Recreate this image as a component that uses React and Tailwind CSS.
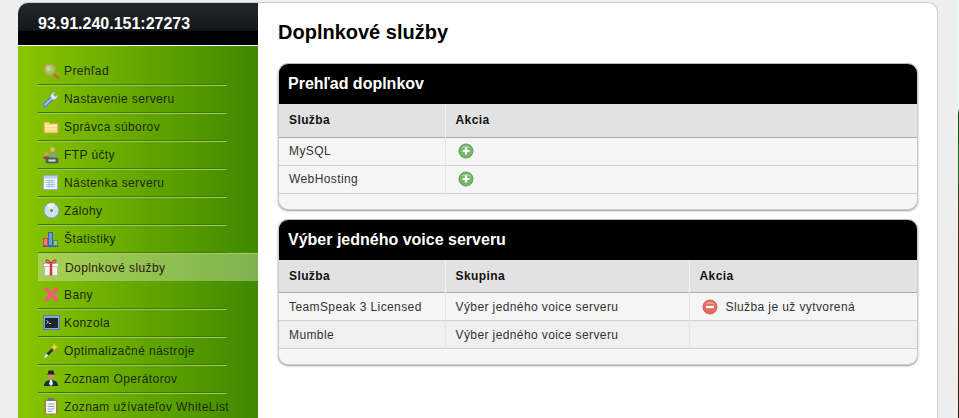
const IconSearch = () => (
  <svg width="18" height="18" viewBox="0 0 18 18">
    <path d="M11 11l5 5" stroke="#b5752f" strokeWidth="3" strokeLinecap="round" />
    <circle cx="7.5" cy="7.5" r="5.5" fill="#9ccb6a" stroke="#c79a4c" strokeWidth="1.6" />
    <circle cx="6.5" cy="6.5" r="2.5" fill="#b9dc92" />
  </svg>
);

const IconWrench = () => (
  <svg width="18" height="18" viewBox="0 0 18 18">
    <path d="M3 15L10 8" stroke="#4f80c8" strokeWidth="4.5" strokeLinecap="round" />
    <path d="M3 15L10 8" stroke="#9cc0ee" strokeWidth="2" strokeLinecap="round" />
    <path d="M9 8c-1-3 1-6 4.500-6l-2 2.500 1.500 2 2.500-1.500c.5 3-2.500 5.500-5 4.500z" fill="#e4e8ee" stroke="#8c98a8" strokeWidth=".6" />
  </svg>
);

const IconFolder = () => (
  <svg width="16" height="14" viewBox="0 0 16 14">
    <path d="M1 2h5l1 1.500h8V13H1z" fill="#f8dc8a" stroke="#d9a441" />
    <path d="M2 6h12" stroke="#fff4c8" strokeWidth="1.500" />
    <path d="M2 9h12" stroke="#fdeeb5" strokeWidth="1.500" />
  </svg>
);

const IconFtp = () => (
  <svg width="18" height="18" viewBox="0 0 18 18">
    <circle cx="10.500" cy="3.500" r="2.500" fill="#e8b070" />
    <path d="M7 9c0-2 2-3 3.500-3S15 7 15 9v3H7z" fill="#7fa868" />
    <circle cx="4.500" cy="8" r="2" fill="#d99a68" />
    <path d="M1 13c0-2 1.500-3 3.500-3S8 11 8 13z" fill="#8a5a44" />
    <rect x="4" y="12" width="12" height="5" rx="1" fill="#59636e" stroke="#30363c" strokeWidth=".5" />
    <rect x="6.500" y="13.500" width="7" height="2" fill="#d8dde2" />
  </svg>
);

const IconTable = () => (
  <svg width="16" height="16" viewBox="0 0 16 16">
    <rect x=".5" y=".5" width="14" height="14" fill="#f4f8fc" stroke="#8eb0d8" />
    <rect x="1" y="1" width="13" height="2.500" fill="#b8d0ec" />
    <path d="M3 5.500h9M3 7.500h9M3 9.500h9M3 11.500h9M6 4.500v8M9 4.500v8" stroke="#98b8dc" strokeWidth=".8" />
  </svg>
);

const IconDisc = () => (
  <svg width="17" height="17" viewBox="0 0 17 17">
    <circle cx="8.500" cy="8.500" r="7.500" fill="#cfe0f4" stroke="#7fa0cc" />
    <path d="M8.500 8.500L4 2.500A7.500 7.500 0 0 1 12 2z" fill="#eaf3fc" />
    <circle cx="8.500" cy="8.500" r="2.200" fill="#6f9a50" stroke="#f4f8fc" />
  </svg>
);

const IconChart = () => (
  <svg width="16" height="16" viewBox="0 0 16 16">
    <rect x=".5" y="7.500" width="4" height="7" fill="#ee7c80" stroke="#c23c48" strokeWidth=".8" />
    <rect x="5.500" y="1.500" width="4" height="13" fill="#6f98e0" stroke="#2c58a8" strokeWidth=".8" />
    <rect x="10.500" y="9.500" width="4" height="5" fill="#8cc48a" stroke="#4c8a58" strokeWidth=".8" />
    <path d="M0 15.500h16" stroke="#4c5c9c" />
  </svg>
);

const IconGift = () => (
  <svg width="16" height="17" viewBox="0 0 16 17">
    <rect x="1.500" y="7" width="13" height="9.500" fill="#f2f2ee" stroke="#a8a8a0" strokeWidth=".6" />
    <rect x=".5" y="4.500" width="15" height="3" fill="#fafaf6" stroke="#a8a8a0" strokeWidth=".6" />
    <path d="M8 4.500v12" stroke="#d8303c" strokeWidth="2.500" />
    <path d="M8 4C6 1 3 0 3 2s3 2 5 2c2 0 5 0 5-2s-3-1-5 2z" fill="none" stroke="#d8303c" strokeWidth="1.100" />
  </svg>
);

const IconCross = () => (
  <svg width="15" height="15" viewBox="0 0 15 15">
    <path d="M2.500 2.500l10 10M12.500 2.500l-10 10" stroke="#f0606c" strokeWidth="4" strokeLinecap="round" />
  </svg>
);

const IconConsole = () => (
  <svg width="17" height="15" viewBox="0 0 17 15">
    <rect x=".5" y=".5" width="16" height="14" fill="#8aa8d4" stroke="#5c7cac" />
    <rect x="2" y="3" width="13" height="10" fill="#20262c" />
    <path d="M3.500 5.500l2 1.500-2 1.500" fill="none" stroke="#e8e8e8" strokeWidth=".9" />
    <path d="M6 8.500h2" stroke="#e8e8e8" strokeWidth=".8" />
  </svg>
);

const IconWand = () => (
  <svg width="16" height="16" viewBox="0 0 16 16">
    <path d="M1.500 14.500l8-8" stroke="#30343a" strokeWidth="2.800" />
    <path d="M1.500 14.500l3-3" stroke="#d8dce0" strokeWidth="2.800" />
    <path d="M11.500 0l1 3 3 1-3 1-1 3-1-3-3-1 3-1z" fill="#f6d860" stroke="#d8a020" strokeWidth=".4" />
  </svg>
);

const IconOperator = () => (
  <svg width="16" height="17" viewBox="0 0 16 17">
    <path d="M1 16c0-4 3-6 7-6s7 2 7 6z" fill="#1c2c48" />
    <path d="M7 10h2l1 4-2 2-2-2z" fill="#e8eef4" />
    <circle cx="8" cy="6" r="3.200" fill="#c89068" />
    <path d="M3.500 4.500h9L11 3.500 10.500.5h-5L5 3.500z" fill="#20242a" />
  </svg>
);

const IconClipboard = () => (
  <svg width="14" height="17" viewBox="0 0 14 17">
    <rect x=".5" y="1.500" width="13" height="15" fill="#a87c44" />
    <rect x="2" y="3" width="10" height="12.500" fill="#f6f8fa" />
    <rect x="4" y="0" width="6" height="3" fill="#6c7880" />
    <path d="M3.500 6h7M3.500 8.500h7M3.500 11h7M3.500 13.500h5" stroke="#7c9cc0" strokeWidth=".9" />
  </svg>
);

const IconPlus = () => (
  <svg width="16" height="16" viewBox="0 0 16 16">
    <circle cx="8" cy="8" r="7" fill="#74b868" stroke="#5c9c58" />
    <path d="M3 5.500C4.500 2 11.500 2 13 5.500 10 4.500 6 4.500 3 5.500z" fill="#a8d8a0" />
    <path d="M8 4.500v7M4.500 8h7" stroke="#fff" strokeWidth="2.200" />
  </svg>
);

const IconMinus = () => (
  <svg width="16" height="16" viewBox="0 0 16 16">
    <circle cx="8" cy="8" r="7" fill="#e86a5c" stroke="#cc5c50" />
    <path d="M3 5.500C4.500 2 11.500 2 13 5.500 10 4.500 6 4.500 3 5.500z" fill="#f4a498" />
    <path d="M4 8h8" stroke="#fff" strokeWidth="2.400" />
  </svg>
);

const menu = [
  { label: 'Prehľad', icon: IconSearch },
  { label: 'Nastavenie serveru', icon: IconWrench },
  { label: 'Správca súborov', icon: IconFolder },
  { label: 'FTP účty', icon: IconFtp },
  { label: 'Nástenka serveru', icon: IconTable },
  { label: 'Zálohy', icon: IconDisc },
  { label: 'Štatistiky', icon: IconChart },
  { label: 'Doplnkové služby', icon: IconGift, active: true },
  { label: 'Bany', icon: IconCross },
  { label: 'Konzola', icon: IconConsole },
  { label: 'Optimalizačné nástroje', icon: IconWand },
  { label: 'Zoznam Operátorov', icon: IconOperator },
  { label: 'Zoznam užívateľov WhiteList', icon: IconClipboard },
];

const Sidebar = () => (
  <div className="w-[240px] shrink-0 flex flex-col">
    <div className="h-[42px] rounded-tl-[10px] bg-[linear-gradient(#23282b_0%,#14171a_65%,#000_68%,#000_100%)] pl-5 pt-[11px] text-base leading-5 font-bold text-white">
      93.91.240.151:27273
    </div>
    <div className="h-px bg-white"></div>
    <div className="flex-1 bg-[linear-gradient(90deg,#8ac500,#3f8900)] pt-[11px]">
      {menu.map((item) => (
        <div
          key={item.label}
          className={`h-[28px] flex items-center ml-5 ${item.active ? 'bg-[linear-gradient(90deg,#a6d152,#7fb24f)] border-t border-[#a9cf63]' : 'mr-[31px] border-b border-b-[#3d7a00] shadow-[0_1px_0_#9dc95a]'}`}
        >
          <span className="w-[26px] flex justify-center shrink-0">
            <item.icon />
          </span>
          <span className={`text-[12px] tracking-[0.4px] whitespace-nowrap ${item.active ? 'text-[#2b1a10] ml-px' : 'text-[#1a2a00]'}`}>
            {item.label}
          </span>
        </div>
      ))}
    </div>
  </div>
);

const Panel = ({ title, columns, rows }) => (
  <div className="rounded-[10px] border border-[#ccc] border-t-[#bbb] bg-[#f5f5f5] shadow-[0_1px_2px_#999] overflow-hidden">
    <div className="h-[40px] bg-black pl-[9px] pt-[10px] text-base leading-5 font-bold text-white">{title}</div>
    <table className="w-full table-fixed border-collapse text-[12px] tracking-[0.4px]">
      <thead>
        <tr className="h-[33px] bg-[#e2e2e2] border-b border-[#aaa]">
          {columns.map((col) => (
            <th key={col.name} style={{ width: col.width }} className="text-left font-bold text-[#111] pl-[10px] border-r border-[#f2f2f2] last:border-r-0">
              {col.name}
            </th>
          ))}
        </tr>
      </thead>
      <tbody>
        {rows.map((row, i) => (
          <tr key={i} className={`h-[28px] border-b border-[#d0d0d0] ${row.alt ? 'bg-[#f0f0f0]' : ''}`}>
            {row.cells.map((cell, j) => (
              <td key={j} className="pl-[10px] text-[#333] border-r border-[#e4e4e4] last:border-r-0">
                {cell}
              </td>
            ))}
          </tr>
        ))}
      </tbody>
    </table>
    <div className="h-[15px]"></div>
  </div>
);

const PlusCell = () => (
  <span className="flex pl-[2px]"><IconPlus /></span>
);

const App = () => (
  <div className="h-[418px] overflow-hidden flex bg-[#eeeeee] font-['Liberation_Sans',Arial,sans-serif]">
    <div className="w-[958px] shrink-0 pl-[18px] pr-[20px] pt-[2px]">
      <div className="h-[500px] flex rounded-t-[10px] bg-white border-t border-r border-[#ccc]">
        <Sidebar />
        <div className="flex-1 pl-5 pr-[19px]">
          <h1 className="text-[20px] leading-6 font-bold text-black mt-[17px] mb-[19px]">Doplnkové služby</h1>
          <div className="flex flex-col gap-[9px]">
            <Panel
              title="Prehľad doplnkov"
              columns={[{ name: 'Služba', width: 166 }, { name: 'Akcia' }]}
              rows={[
                { cells: ['MySQL', <PlusCell />] },
                { cells: ['WebHosting', <PlusCell />] },
              ]}
            />
            <Panel
              title="Výber jedného voice serveru"
              columns={[{ name: 'Služba', width: 166 }, { name: 'Skupina', width: 244 }, { name: 'Akcia' }]}
              rows={[
                {
                  cells: [
                    'TeamSpeak 3 Licensed',
                    'Výber jedného voice serveru',
                    <span className="flex items-center gap-2 pl-[2px]"><IconMinus />Služba je už vytvorená</span>,
                  ],
                },
                { alt: true, cells: ['Mumble', 'Výber jedného voice serveru', ''] },
              ]}
            />
          </div>
        </div>
      </div>
    </div>
    <div className="w-px h-[418px] bg-[linear-gradient(#e6fffa_0%,#e6fffa_26%,#0a5a12_27%,#0c6a1a_40%,#5a2a14_55%,#2a1a10_100%)]"></div>
  </div>
);

export default App;
